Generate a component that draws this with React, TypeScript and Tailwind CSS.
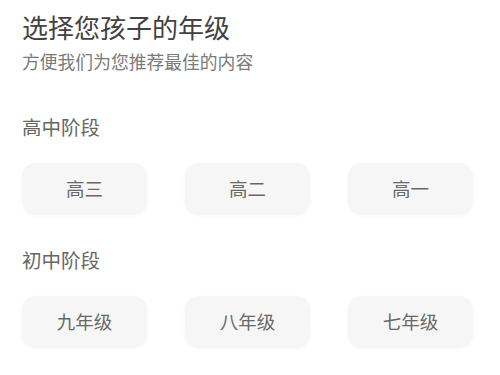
import React from "react";

const font = { fontFamily: '"Noto Sans CJK SC", "Noto Sans", sans-serif' };

function GradeButton({ label }: { label: string }) {
  return (
    <div className="flex h-[52px] w-[125px] items-center justify-center rounded-[14px] bg-[#f6f6f6] text-[18.5px] text-[#686868] shadow-[0_1px_5px_rgba(0,0,0,0.03)]">
      {label}
    </div>
  );
}

function Section({ title, grades }: { title: string; grades: string[] }) {
  return (
    <div className="flex flex-col">
      <div className="h-[26px] text-[19.5px] leading-[26px] text-[#666666]">{title}</div>
      <div className="mt-[23px] flex gap-[38px]">
        {grades.map((g) => (
          <GradeButton key={g} label={g} />
        ))}
      </div>
    </div>
  );
}

export default function App() {
  return (
    <div className="h-[375px] w-[500px] overflow-hidden bg-white pl-[22px] pt-[11px]" style={font}>
      <div className="text-[26px] leading-[32px] text-[#424242]">选择您孩子的年级</div>
      <div className="mt-[6px] text-[17.8px] leading-[24px] text-[#7a7a7a]">方便我们为您推荐最佳的内容</div>
      <div className="mt-[41px]">
        <Section title="高中阶段" grades={["高三", "高二", "高一"]} />
      </div>
      <div className="mt-[32px]">
        <Section title="初中阶段" grades={["九年级", "八年级", "七年级"]} />
      </div>
    </div>
  );
}
